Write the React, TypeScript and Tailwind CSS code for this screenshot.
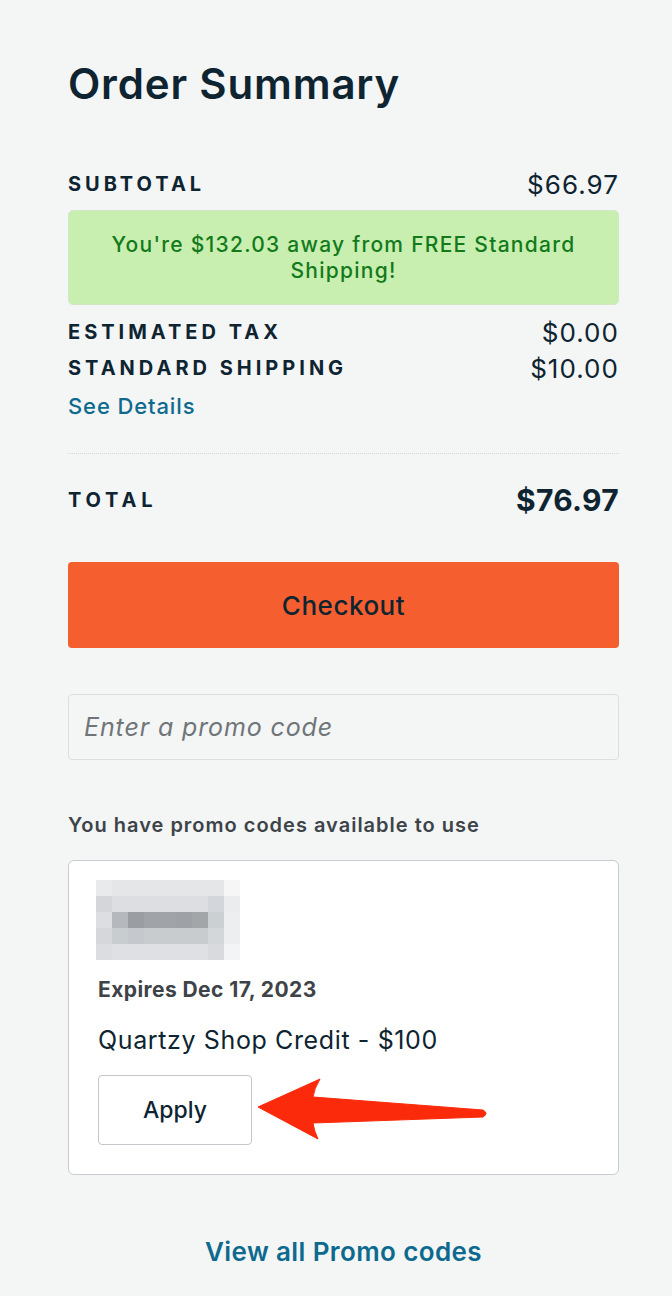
const pixels: string[][] = [
  ["#e9eaec", "#e5e6e8", "#e5e6e8", "#e5e6e8", "#e5e6e8", "#e5e6e8", "#e5e6e8", "#e5e6e8", "#f6f6f7"],
  ["#d4d6da", "#dcdee2", "#dcdee2", "#dcdee2", "#dcdee2", "#dcdee2", "#dcdee2", "#d3d7db", "#ebecee"],
  ["#dcdee1", "#b5b9bd", "#9a9ea3", "#a0a4a8", "#a0a4a8", "#9ea2a6", "#a2a6a9", "#cbd0d3", "#eceef0"],
  ["#d5d7db", "#c8cdd0", "#c5c8cc", "#c8cccf", "#c8cccf", "#c8cccf", "#c8cccf", "#d3d7da", "#eceeef"],
  ["#dcdde1", "#dfe0e3", "#dfe0e3", "#dfe0e3", "#dfe0e3", "#dfe0e3", "#dfe0e3", "#d8dadd", "#f3f4f5"],
];

function BlurredLogo() {
  return (
    <svg width="144" height="80" viewBox="0 0 144 80" className="block -ml-[2px]">
      {pixels.map((row, r) =>
        row.map((c, i) => <rect key={`${r}-${i}`} x={i * 16} y={r * 16} width="16" height="16" fill={c} />)
      )}
    </svg>
  );
}

function Row({ label, value }: { label: string; value: string }) {
  return (
    <div className="flex items-center justify-between h-8">
      <span className="text-[20px] font-bold tracking-[0.2em] text-[#0e2431]">{label}</span>
      <span className="text-[26px] tracking-[0.04em] text-[#0e2431]">{value}</span>
    </div>
  );
}

export default function App() {
  return (
    <div
      className="min-h-[1296px] w-full bg-[#f4f5f5] px-[68px] pt-[56px]"
      style={{ fontFamily: "Inter, 'Open Sans', sans-serif" }}
    >
      <div className="w-[551px]">
        <h1 className="text-[42px] leading-[56px] font-semibold tracking-[0.02em] text-[#0e2431]">Order Summary</h1>

        <div className="mt-[56px]">
          <Row label="SUBTOTAL" value="$66.97" />
        </div>

        <div className="mt-[10px] rounded-[5px] border border-[#d3e6c6] bg-[#c8efb0] pt-[21px] pb-[20px] text-center text-[21px] leading-[26px] font-medium tracking-[0.06em] text-[#137a1c]">
          You're $132.03 away from FREE Standard
          <br />
          Shipping!
        </div>

        <div className="mt-[11px]">
          <Row label="ESTIMATED TAX" value="$0.00" />
        </div>
        <div className="mt-[4px]">
          <Row label="STANDARD SHIPPING" value="$10.00" />
        </div>
        <a className="mt-[8px] block h-7 text-[22px] leading-7 font-medium tracking-[0.04em] text-[#0d6a8e]">See Details</a>

        <div className="mt-[33px] border-t border-dotted border-[#d3d6d8]" />

        <div className="mt-[28px] flex h-9 items-center justify-between">
          <span className="text-[20px] font-bold tracking-[0.24em] text-[#0e2431]">TOTAL</span>
          <span className="text-[30px] font-bold tracking-[0.01em] text-[#0e2431]">$76.97</span>
        </div>

        <button className="mt-[44px] flex h-[86px] w-full items-center justify-center rounded-[4px] bg-[#f55f2f] text-[26px] font-medium tracking-[0.02em] text-[#0e2431]">
          Checkout
        </button>

        <input
          className="mt-[46px] block h-[66px] w-full rounded-[4px] border border-[#dcdfe1] bg-[#f4f5f5] px-[15px] text-[25px] italic tracking-[0.035em] text-[#0e2431] placeholder:text-[#70757a] outline-none"
          placeholder="Enter a promo code"
        />

        <p className="mt-[53px] text-[20px] leading-6 font-semibold tracking-[0.05em] text-[#3d4449]">
          You have promo codes available to use
        </p>

        <div className="relative mt-[23px] rounded-[6px] border border-[#c8ccd0] bg-white pl-[29px] pt-[19px] pb-[29px]">
          <BlurredLogo />
          <p className="mt-[18px] text-[21px] leading-6 font-bold tracking-[0.02em] text-[#3e4347]">Expires Dec 17, 2023</p>
          <p className="mt-[22px] text-[25px] leading-8 tracking-[0.025em] text-[#0e2431]">Quartzy Shop Credit - $100</p>
          <button className="mt-[19px] flex h-[70px] w-[154px] items-center justify-center rounded-[4px] border border-[#c3c7cb] bg-white text-[23px] font-medium text-[#0e2431]">
            Apply
          </button>

          <svg className="pointer-events-none absolute left-[-1px] top-[-1px]" width="551" height="315" viewBox="0 0 551 315">
            <g transform="translate(-68 -860)">
              <path
                d="M258 1107 L320 1079 Q314 1089 313 1097 L483 1110 Q489 1113.5 483 1117 L313 1123 Q314 1131 318 1139 Z"
                fill="#fb2a0a"
                stroke="#fb2a0a"
                strokeWidth="1"
                strokeLinejoin="round"
              />
            </g>
          </svg>
        </div>

        <a className="mt-[61px] block h-8 text-center text-[26px] leading-8 font-semibold tracking-[0.015em] text-[#0d6a8e]">
          View all Promo codes
        </a>
      </div>
    </div>
  );
}
